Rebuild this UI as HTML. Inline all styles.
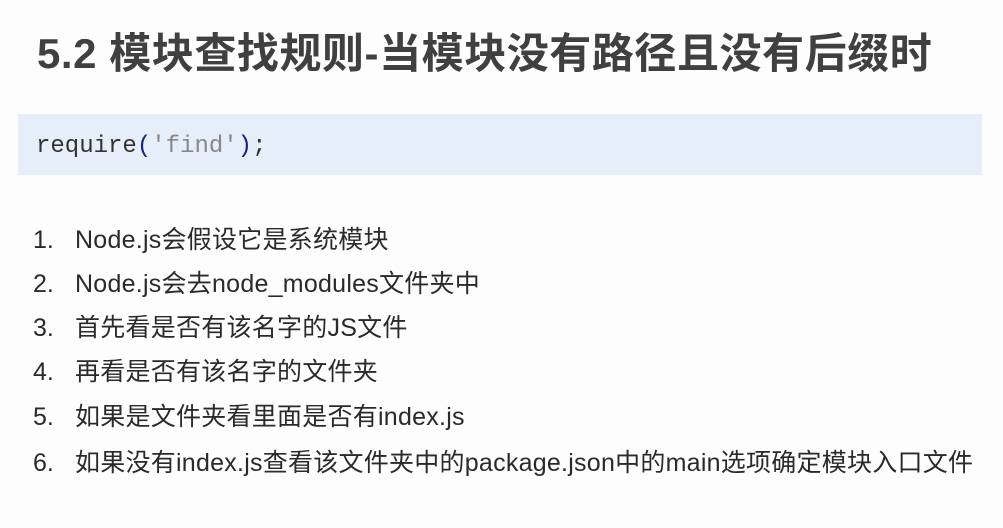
<!DOCTYPE html>
<html><head><meta charset="utf-8"><style>
body{margin:0;width:1003px;height:528px;background:#fdfdfd;overflow:hidden;position:relative;font-family:"Liberation Sans","Noto Sans CJK SC",sans-serif}
h1{position:absolute;left:37px;top:20px;margin:0;font-size:42px;font-weight:bold;color:#404040;white-space:nowrap;letter-spacing:0.55px}
.code{position:absolute;left:18px;top:114px;width:964px;height:61px;background:#e6eefa}
.code span.t{position:absolute;left:18px;top:19px;font-family:"Liberation Mono",monospace;font-size:24px;color:#333;white-space:nowrap}
.s{color:#888}.p{color:#1a237e}
.li{position:absolute;left:33px;font-size:25px;color:#2a2a2a;white-space:nowrap;letter-spacing:0.25px}
.li b{font-weight:normal;display:inline-block;width:42px;letter-spacing:0}
</style></head><body>
<h1>5.2 模块查找规则-当模块没有路径且没有后缀时</h1>
<div class="code"><span class="t">require<span class="p">(</span><span class="s">'find'</span><span class="p">)</span>;</span></div>
<div class="li" style="top:220px"><b>1.</b>Node.js会假设它是系统模块</div>
<div class="li" style="top:264px"><b>2.</b>Node.js会去node_modules文件夹中</div>
<div class="li" style="top:308px"><b>3.</b>首先看是否有该名字的JS文件</div>
<div class="li" style="top:352px"><b>4.</b>再看是否有该名字的文件夹</div>
<div class="li" style="top:397px"><b>5.</b>如果是文件夹看里面是否有index.js</div>
<div class="li" style="top:443px"><b>6.</b>如果没有index.js查看该文件夹中的package.json中的main选项确定模块入口文件</div>
</body></html>
